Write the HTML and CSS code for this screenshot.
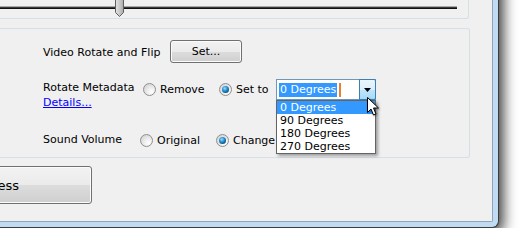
FILE: index.html
```html
<!DOCTYPE html>
<html>
<head>
<meta charset="utf-8">
<link rel="stylesheet" href="styles.css">
</head>
<body>
<div class="window">
  <div class="client">
    <div class="group group-top">
      <div class="track"></div>
      <svg class="thumb" width="11" height="18" viewBox="0 0 11 18">
        <defs>
          <linearGradient id="tg" x1="0" y1="0" x2="1" y2="0">
            <stop offset="0" stop-color="#e4e4e4"/>
            <stop offset="0.5" stop-color="#c9c9c9"/>
            <stop offset="1" stop-color="#a9a9a9"/>
          </linearGradient>
        </defs>
        <path d="M1.5 -1 V12.5 L5.5 16.5 L9.5 12.5 V-1 Z" fill="url(#tg)" stroke="#5e5e5e" stroke-width="1"/>
      </svg>
    </div>
    <div class="group group-main">
      <div class="row row-flip">
        <span class="label label-flip">Video Rotate and Flip</span>
        <button class="btn btn-set">Set...</button>
      </div>
      <div class="row row-meta">
        <div class="label-col">
          <span class="label">Rotate Metadata</span>
          <a class="link">Details...</a>
        </div>
        <span class="radio-item ri-remove"><span class="radio"></span><span>Remove</span></span>
        <span class="radio-item ri-setto"><span class="radio on"></span><span>Set to</span></span>
        <div class="combo">
          <div class="combo-text"><span class="sel">0 Degrees</span><span class="caret"></span></div>
          <div class="combo-btn">
            <svg width="7" height="4" viewBox="0 0 7 4"><path d="M0 0 H7 L3.5 4 Z" fill="#000"/></svg>
          </div>
          <ul class="dropdown">
            <li class="active">0 Degrees</li>
            <li>90 Degrees</li>
            <li>180 Degrees</li>
            <li>270 Degrees</li>
          </ul>
          <svg class="cursor" width="14" height="21" viewBox="0 0 14 21">
            <path d="M1.5 1.5 V16.5 L5 13 L7.5 19 L10 18 L7.5 12 H12.5 Z" fill="#fff" stroke="#000" stroke-width="1" stroke-linejoin="miter"/>
          </svg>
        </div>
      </div>
      <div class="row row-sound">
        <span class="label label-sound">Sound Volume</span>
        <span class="radio-item ri-orig"><span class="radio"></span><span>Original</span></span>
        <span class="radio-item ri-change"><span class="radio on"></span><span>Change</span></span>
      </div>
    </div>
    <button class="btn btn-process">Process</button>
  </div>
</div>
</body>
</html>
```

FILE: styles.css
```css
html, body {
  margin: 0;
  padding: 0;
  background: #ffffff;
  overflow: hidden;
}
body {
  font-family: "DejaVu Sans", Verdana, sans-serif;
  font-size: 11px;
  color: #000000;
}
.window {
  box-sizing: border-box;
  width: 529px;
  height: 258px;
  margin: -30px 0 0 -30px;
  padding: 0 5px 5px 0;
  background: #c2dbf4;
  border-right: 1px solid #3d3d3d;
  border-bottom: 1px solid #3d3d3d;
  border-bottom-right-radius: 7px;
  box-shadow: 2px 4px 14px 2px rgba(0, 0, 0, 0.8);
}
.client {
  box-sizing: border-box;
  width: 523px;
  height: 252px;
  padding: 30px 0 0 30px;
  background: #f0f0f0;
  border-right: 1px solid #8ea4bb;
  border-bottom: 1px solid #8ea4bb;
  border-bottom-right-radius: 2px;
  display: flex;
  flex-direction: column;
  align-items: flex-start;
}
.group {
  box-sizing: border-box;
  border: 1px solid #d5dfe5;
  border-left: none;
}
.group-top {
  position: relative;
  width: 469px;
  height: 19px;
  border-top: none;
  border-bottom-right-radius: 3px;
}
.track {
  margin-top: 6px;
  width: 457px;
  height: 3px;
  background: linear-gradient(#a8a8a8 0 1px, #3a3a3a 1px 2px, #111111 2px 3px);
}
.thumb {
  position: absolute;
  left: 114px;
  top: 0;
}
.group-main {
  margin-top: 9px;
  width: 470px;
  height: 130px;
  border-radius: 0 3px 3px 0;
  padding-left: 43px;
  display: flex;
  flex-direction: column;
}
.row {
  display: flex;
}
.label {
  line-height: 15px;
  white-space: nowrap;
}
.row-flip {
  margin-top: 11px;
  height: 23px;
  align-items: center;
}
.label-flip {
  width: 127px;
  margin-top: 2px;
}
.btn {
  box-sizing: border-box;
  font-family: "DejaVu Sans", Verdana, sans-serif;
  color: #000000;
  border: 1px solid #707070;
  border-radius: 3px;
  background: linear-gradient(#f2f2f2 0%, #ebebeb 50%, #dddddd 50%, #cfcfcf 100%);
  box-shadow: inset 0 0 0 1px #fbfbfb;
  padding: 0;
  margin: 0;
}
.btn-set {
  width: 72px;
  height: 23px;
  font-size: 11px;
}
.row-meta {
  margin-top: 16px;
  align-items: flex-start;
}
.label-col {
  width: 100px;
  margin-top: 1px;
  display: flex;
  flex-direction: column;
}
.link {
  line-height: 15px;
  color: #0000ff;
  text-decoration: underline;
  align-self: flex-start;
}
.radio-item {
  display: flex;
  align-items: center;
  gap: 4px;
  white-space: nowrap;
  line-height: 13px;
}
.row-meta .radio-item {
  height: 21px;
}
.ri-remove { width: 76px; }
.ri-setto { width: 57px; }
.radio {
  position: relative;
  box-sizing: border-box;
  flex: none;
  width: 13px;
  height: 13px;
  border-radius: 50%;
  border: 1px solid #8e8f8f;
  background: radial-gradient(circle at 68% 72%, #ffffff 0%, #ececec 40%, #cbcbcb 100%);
}
.radio.on::after {
  content: "";
  position: absolute;
  left: 2px;
  top: 2px;
  width: 7px;
  height: 7px;
  border-radius: 50%;
  background: radial-gradient(circle at 40% 35%, #9ae2ff 0%, #2b93d2 38%, #0f5585 72%, #0b3a5a 100%);
}
.combo {
  position: relative;
  box-sizing: border-box;
  width: 100px;
  height: 21px;
  border: 1px solid #6f97bb;
  background: #ffffff;
  display: flex;
}
.combo-text {
  flex: 1;
  display: flex;
  align-items: center;
  padding-left: 2px;
}
.sel {
  background: #3399ff;
  color: #ffffff;
  line-height: 14px;
  padding: 0 1px;
}
.caret {
  width: 2px;
  height: 14px;
  margin-left: 2px;
  background: #e9802f;
}
.combo-btn {
  box-sizing: border-box;
  width: 17px;
  margin: -1px -1px -1px 0;
  border: 1px solid #3c7fb1;
  border-radius: 0 2px 2px 0;
  background: linear-gradient(#eaf6fd 0%, #d9f0fc 50%, #bee6fd 50%, #a7d9f5 100%);
  display: flex;
  align-items: center;
  justify-content: center;
}
.combo-btn svg {
  display: block;
  margin-top: 1px;
}
.dropdown {
  position: absolute;
  left: -1px;
  top: 20px;
  width: 100px;
  box-sizing: border-box;
  margin: 0;
  padding: 0;
  list-style: none;
  background: #ffffff;
  border: 1px solid #646464;
  box-shadow: 2px 2px 3px rgba(0, 0, 0, 0.35);
  z-index: 2;
}
.dropdown li {
  line-height: 13px;
  height: 13px;
  padding-left: 3px;
  white-space: nowrap;
  color: #000000;
}
.dropdown li.active {
  background: #3399ff;
  color: #ffffff;
}
.cursor {
  position: absolute;
  left: 89px;
  top: 16px;
  z-index: 3;
  filter: drop-shadow(1px 1px 1px rgba(0, 0, 0, 0.35));
}
.row-sound {
  margin-top: 23px;
  height: 15px;
  align-items: center;
}
.label-sound {
  width: 97px;
  margin-bottom: 2px;
}
.ri-orig { width: 76px; }
.ri-change { width: 70px; }
.btn-process {
  display: block;
  margin-top: 8px;
  margin-left: -103px;
  width: 195px;
  height: 38px;
  font-size: 13px;
}
```
